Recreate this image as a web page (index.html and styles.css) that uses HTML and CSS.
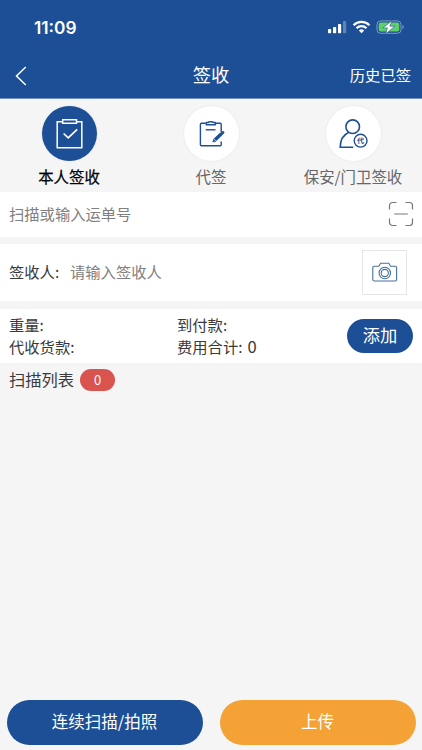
FILE: index.html
```html
<!DOCTYPE html>
<html lang="zh-CN">
<head>
<meta charset="utf-8">
<meta name="viewport" content="width=device-width, initial-scale=1">
<title>签收</title>
<link rel="stylesheet" href="styles.css">
</head>
<body>
<div class="app">
  <header class="header">
    <div class="status">
      <span class="clock">11:09</span>
      <svg class="status-icons" width="78" height="16" viewBox="0 0 78 16">
        <g fill="#fff">
          <rect x="1" y="9" width="3.2" height="4.2" rx=".8"/>
          <rect x="6" y="7" width="3.2" height="6.2" rx=".8"/>
          <rect x="11" y="4" width="3.2" height="9.2" rx=".8"/>
          <rect x="16" y="1" width="3.2" height="12.2" rx=".8" opacity=".3"/>
        </g>
        <g fill="none" stroke="#fff" stroke-width="2.2">
          <path d="M26.6 5.2a11 11 0 0 1 15.8 0"/>
          <path d="M29.5 8.3a7 7 0 0 1 10 0"/>
        </g>
        <path d="M34.5 13.3l-2.7-2.8a4 4 0 0 1 5.4 0z" fill="#fff"/>
        <rect x="50" y=".9" width="24" height="12.4" rx="3.6" fill="none" stroke="#7f9cc6"/>
        <rect x="51.7" y="2.6" width="20.6" height="9" rx="2" fill="#5fd068"/>
        <path d="M75.5 5v4.2c1.8-.6 1.8-3.6 0-4.2z" fill="#7f9cc6"/>
        <path d="M65 .4L56 7.9h4.4L58.6 14l9.2-7.8h-4.9z" fill="#fff" stroke="#1c4f96" stroke-width=".6"/>
      </svg>
    </div>
    <nav class="navbar">
      <svg class="back" width="12" height="20" viewBox="0 0 12 20"><path d="M10.8 1L1.5 10l9.3 9" fill="none" stroke="#fff" stroke-width="1.5"/></svg>
      <h1 class="title">签收</h1>
      <span class="history">历史已签</span>
    </nav>
  </header>

  <section class="tabs">
    <div class="tab tab-active">
      <span class="disc">
        <svg width="55" height="55" viewBox="0 0 55 55" fill="none" stroke="#fff" stroke-width="1.5">
          <path d="M20 15.8h-4.8v26h24.6v-26H35"/>
          <path d="M20.7 13.8h13.8v3.5H20.7z"/>
          <path d="M21.6 27.5l4.6 4.3 9-8.4" stroke-width="1.7"/>
        </svg>
      </span>
      <span class="tab-label">本人签收</span>
    </div>
    <div class="tab">
      <span class="disc">
        <svg width="55" height="55" viewBox="0 0 55 55" fill="none" stroke="#1c4f96" stroke-width="1.4" stroke-linejoin="round">
          <path d="M21.6 17.2h-4.2a1 1 0 0 0-1 1v20.6a1 1 0 0 0 1 1h18.8a1 1 0 0 0 1-1v-3.3M37.2 26v-7.8a1 1 0 0 0-1-1H32"/>
          <path d="M22.2 18.7v-2.2h1.9c.3-1.1 5-1.1 5.3 0h2v2.2z"/>
          <path d="M21.7 23.8h9.8"/>
          <path d="M31.1 33.8l6.3-6" stroke-width="3.4"/>
          <path d="M38 27.3l.9-.8" stroke-width="3" stroke-linecap="round"/>
          <path d="M28.7 36.1l.8-3 2.5 2.4z" fill="#1c4f96" stroke-width=".4"/>
        </svg>
      </span>
      <span class="tab-label">代签</span>
    </div>
    <div class="tab">
      <span class="disc">
        <svg width="55" height="55" viewBox="0 0 55 55" fill="none" stroke="#1c4f96" stroke-width="1.6">
          <circle cx="26.7" cy="20.7" r="6.8"/>
          <path d="M22.5 26.5c-5.2 2.4-8.2 7.8-8.3 14.7h13.1"/>
          <circle cx="34.6" cy="34.7" r="6.4" stroke-width="1.4"/>
          <text class="proxy" x="34.6" y="37.2" text-anchor="middle">代</text>
        </svg>
      </span>
      <span class="tab-label">保安/门卫签收</span>
    </div>
  </section>

  <section class="row row-waybill">
    <span class="placeholder">扫描或输入运单号</span>
    <svg class="scan" width="26" height="26" viewBox="0 0 26 26" fill="none" stroke="#777" stroke-width="1.2">
      <path d="M1.5 8.5V4.5a3 3 0 0 1 3-3h4M17.5 1.5h4a3 3 0 0 1 3 3v4M24.5 17.5v4a3 3 0 0 1-3 3h-4M8.5 24.5h-4a3 3 0 0 1-3-3v-4M6.2 13h13.6"/>
    </svg>
  </section>

  <section class="row row-signer">
    <span class="label">签收人:</span>
    <span class="placeholder">请输入签收人</span>
    <span class="camera">
      <svg width="26" height="20" viewBox="0 0 26 20" fill="none" stroke="#47709f" stroke-width="1.1" stroke-linejoin="round">
        <path d="M2.2 4.2h4.6l1.8-3h8.2l1.8 3h4.6a1.4 1.4 0 0 1 1.4 1.4v12a1.4 1.4 0 0 1-1.4 1.4h-21a1.4 1.4 0 0 1-1.4-1.4v-12a1.4 1.4 0 0 1 1.4-1.4z"/>
        <circle cx="12.8" cy="11" r="5.7"/>
        <circle cx="12.8" cy="11" r="3.6"/>
      </svg>
    </span>
  </section>

  <section class="summary">
    <div class="facts">
      <span>重量:</span><span>到付款:</span>
      <span>代收货款:</span><span>费用合计: <span class="total">0</span></span>
    </div>
    <button class="add">添加</button>
  </section>

  <section class="list-head">
    <span class="list-title">扫描列表</span>
    <span class="badge">0</span>
  </section>

  <footer class="actions">
    <button class="action action-scan">连续扫描/拍照</button>
    <button class="action action-upload">上传</button>
  </footer>
</div>
</body>
</html>
```
FILE: styles.css
```css
* { box-sizing: border-box; }
body {
  margin: 0;
  background: #f5f5f5;
  color: #3a3a3a;
  font-family: "Noto Sans CJK SC", sans-serif;
  font-size: 15.3px;
}
svg { display: block; flex: none; }
button {
  border: 0;
  padding: 0 0 3px;
  color: #fff;
  font-family: inherit;
}
.app {
  display: flex;
  flex-direction: column;
  height: 750px;
  overflow: hidden;
}
.header {
  height: 99px;
  background: #1c4f96;
  border-bottom: 1px solid #7193c4;
  color: #fff;
}
.status {
  display: flex;
  align-items: center;
  justify-content: space-between;
  height: 54px;
  padding: 1px 17px 0 34px;
}
.clock {
  font: 600 17.3px/20px Inter, sans-serif;
}
.navbar {
  display: grid;
  grid-template-columns: 1fr auto 1fr;
  align-items: center;
  height: 44px;
  padding: 0 12px 0 15px;
}
.back { margin: 0 0 1px; }
.title {
  margin: 0 3px 5px 0;
  font-size: 18.3px;
  line-height: 24px;
  font-weight: 400;
}
.history {
  justify-self: end;
  line-height: 24px;
  margin: 0 -1px 5px 0;
}
.tabs {
  display: grid;
  grid-template-columns: repeat(3, 1fr);
  height: 93px;
  margin: 0 -2px;
  padding-top: 7px;
}
.tab {
  display: flex;
  flex-direction: column;
  align-items: center;
  color: #666;
}
.tab-active {
  color: #000;
  -webkit-text-stroke: .25px #000;
}
.disc {
  width: 55px;
  height: 55px;
  border-radius: 50%;
  background: #fff;
  box-shadow: 0 0 2px #e4dfe2;
}
.tab-active .disc { background: #1c4f96; }
.proxy {
  font-size: 7px;
  font-weight: 700;
  fill: #1c4f96;
  stroke: none;
}
.tab-label {
  margin-top: 3px;
  line-height: 24px;
  font-size: 15.4px;
  white-space: nowrap;
}
.row {
  display: flex;
  align-items: center;
  background: #fff;
}
.row-waybill {
  height: 45px;
  padding: 0 8px 0 9px;
  justify-content: space-between;
}
.scan { margin-bottom: 1px; }
.placeholder {
  color: #808080;
  padding-bottom: 3px;
}
.row-signer {
  height: 57px;
  margin-top: 7px;
  padding: 0 15px 0 9px;
}
.label {
  width: 61px;
  padding-bottom: 3px;
}
.camera {
  display: flex;
  align-items: center;
  justify-content: center;
  width: 45px;
  height: 45px;
  margin-left: auto;
  padding-bottom: 1px;
  border: 1px solid #e6e6e6;
}
.summary {
  display: flex;
  align-items: center;
  height: 54px;
  margin-top: 8px;
  padding: 0 9px;
  background: #fff;
}
.facts {
  display: grid;
  grid-template-columns: 168px 1fr;
  flex: 1;
  line-height: 22px;
  padding-bottom: 2px;
}
.total {
  margin-left: 1.5px;
  font-size: 16.5px;
  line-height: 1;
}
.add {
  width: 66px;
  height: 34px;
  border-radius: 17px;
  background: #1c4f96;
  font-size: 17.3px;
}
.list-head {
  display: flex;
  align-items: center;
  gap: 6px;
  height: 34px;
  padding-left: 9px;
  font-size: 16.3px;
}
.list-title { padding-bottom: 2px; }
.badge {
  width: 35px;
  height: 22px;
  border-radius: 11px;
  background: #d9534f;
  color: #fff;
  font-size: 13px;
  line-height: 21px;
  text-align: center;
}
.actions {
  display: grid;
  grid-template-columns: 1fr 1fr;
  gap: 17px;
  margin-top: auto;
  padding: 0 6.5px 5px;
}
.action {
  height: 45px;
  border-radius: 23px;
  font-size: 16.5px;
}
.action-scan { background: #1c4f96; }
.action-upload { background: #f4a135; }
```
